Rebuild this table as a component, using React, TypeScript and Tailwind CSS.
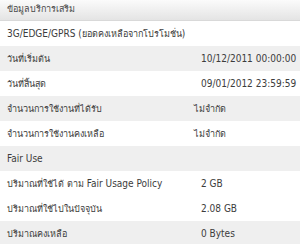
import React from "react";

type Row = { label: string; value?: string; shade?: boolean; full?: boolean };

const rows: Row[] = [
  { label: "3G/EDGE/GPRS (ยอดคงเหลือจากโปรโมชั่น)", full: true },
  { label: "วันที่เริ่มต้น", value: "10/12/2011 00:00:00", shade: true },
  { label: "วันที่สิ้นสุด", value: "09/01/2012 23:59:59" },
  { label: "จำนวนการใช้งานที่ได้รับ", value: "ไม่จำกัด", shade: true },
  { label: "จำนวนการใช้งานคงเหลือ", value: "ไม่จำกัด" },
  { label: "Fair Use", full: true, shade: true },
  { label: "ปริมาณที่ใช้ได้ ตาม Fair Usage Policy", value: "2 GB" },
  { label: "ปริมาณที่ใช้ไปในปัจจุบัน", value: "2.08 GB" },
  { label: "ปริมาณคงเหลือ", value: "0 Bytes", shade: true },
];

// Thai script runs a touch smaller so they sit with the Latin text
function Mixed({ text }: { text: string }) {
  const parts = text.split(/([\u0E00-\u0E7F]+)/).filter(Boolean);
  return (
    <>
      {parts.map((p, i) =>
        /[\u0E00-\u0E7F]/.test(p) ? (
          <span key={i} className="text-[9px]">
            {p}
          </span>
        ) : (
          <span key={i}>{p}</span>
        )
      )}
    </>
  );
}

export default function App() {
  return (
    <div
      className="w-[300px] h-[244px] overflow-hidden bg-white text-[10px] text-[#3c3c3c]"
      style={{ fontFamily: '"DejaVu Sans Condensed", "DejaVu Sans", "Noto Sans", sans-serif' }}
    >
      <div className="h-[21px] flex items-center px-[7px] bg-gradient-to-b from-[#fbfbfb] to-[#e4e4e4] border-b border-[#d9d9d9] text-[#4a4a4a]">
        <Mixed text="ข้อมูลบริการเสริม" />
      </div>
      {rows.map((r, i) => (
        <div
          key={i}
          className={`h-[25px] flex items-center ${r.shade ? "bg-[#efefef]" : "bg-white"}`}
        >
          <div className={`${r.full ? "flex-1" : "w-[200px]"} pl-[7px] whitespace-nowrap`}>
            <Mixed text={r.label} />
          </div>
          {r.value && (
            <div className={`flex-1 whitespace-nowrap ${/[\u0E00-\u0E7F]/.test(r.value) ? "-ml-[6px]" : "pl-[1px]"}`}>
              <Mixed text={r.value} />
            </div>
          )}
        </div>
      ))}
    </div>
  );
}
